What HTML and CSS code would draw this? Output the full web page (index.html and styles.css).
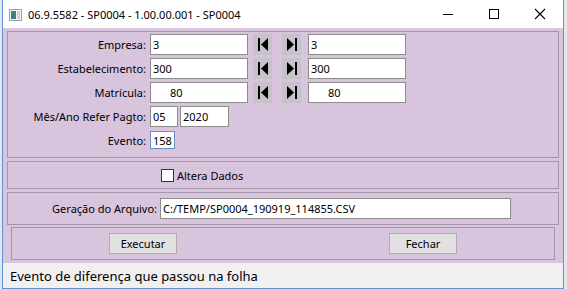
FILE: index.html
```html
<!DOCTYPE html>
<html lang="pt">

<head>
    <meta charset="UTF-8">
    <title>06.9.5582 - SP0004 - 1.00.00.001 - SP0004</title>
    <link rel="stylesheet" href="styles.css">
</head>

<body>
    <div class="window">
        <div class="titlebar">
            <svg class="app-icon" width="13" height="12" viewBox="0 0 13 12">
                <rect x="0.5" y="0.5" width="12" height="11" fill="#f4f6f6" stroke="#9aa4a8"/>
                <rect x="2" y="2" width="5" height="8" fill="#3f7f80"/>
                <rect x="8" y="2" width="3" height="8" fill="#c9d3d6"/>
            </svg>
            <span class="title">06.9.5582 - SP0004 - 1.00.00.001 - SP0004</span>
            <div class="controls">
                <svg class="ctl" width="46" height="28" viewBox="0 0 46 28">
                    <line x1="18" y1="14.5" x2="28" y2="14.5" stroke="#000" stroke-width="1"/>
                </svg>
                <svg class="ctl" width="46" height="28" viewBox="0 0 46 28">
                    <rect x="18.5" y="9.5" width="9" height="9" fill="none" stroke="#000" stroke-width="1"/>
                </svg>
                <svg class="ctl" width="46" height="28" viewBox="0 0 46 28">
                    <path d="M18 9 L28 19 M28 9 L18 19" stroke="#000" stroke-width="1.1"/>
                </svg>
            </div>
        </div>

        <div class="content">
            <div class="panel panel-fields">
                <div class="row">
                    <label class="lbl">Empresa:</label>
                    <input class="field f-wide" value="3">
                    <button class="nav nav-first"><svg width="12" height="13" viewBox="0 0 12 13"><rect x="1" y="0" width="2" height="13"/><path d="M11 0 L4 6.5 L11 13 Z"/></svg></button>
                    <button class="nav nav-last"><svg width="12" height="13" viewBox="0 0 12 13"><path d="M1 0 L8 6.5 L1 13 Z"/><rect x="9" y="0" width="2" height="13"/></svg></button>
                    <input class="field f-wide" value="3">
                </div>
                <div class="row">
                    <label class="lbl">Estabelecimento:</label>
                    <input class="field f-wide" value="300">
                    <button class="nav nav-first"><svg width="12" height="13" viewBox="0 0 12 13"><rect x="1" y="0" width="2" height="13"/><path d="M11 0 L4 6.5 L11 13 Z"/></svg></button>
                    <button class="nav nav-last"><svg width="12" height="13" viewBox="0 0 12 13"><path d="M1 0 L8 6.5 L1 13 Z"/><rect x="9" y="0" width="2" height="13"/></svg></button>
                    <input class="field f-wide" value="300">
                </div>
                <div class="row">
                    <label class="lbl">Matrícula:</label>
                    <input class="field f-wide num" value="80">
                    <button class="nav nav-first"><svg width="12" height="13" viewBox="0 0 12 13"><rect x="1" y="0" width="2" height="13"/><path d="M11 0 L4 6.5 L11 13 Z"/></svg></button>
                    <button class="nav nav-last"><svg width="12" height="13" viewBox="0 0 12 13"><path d="M1 0 L8 6.5 L1 13 Z"/><rect x="9" y="0" width="2" height="13"/></svg></button>
                    <input class="field f-wide num" value="80">
                </div>
                <div class="row">
                    <label class="lbl">Mês/Ano Refer Pagto:</label>
                    <input class="field f-month" value="05">
                    <input class="field f-year" value="2020">
                </div>
                <div class="row row-short">
                    <label class="lbl">Evento:</label>
                    <div class="field f-event">158<span class="caret"></span></div>
                </div>
            </div>

            <div class="panel panel-check">
                <span class="checkbox"></span>
                <span class="check-label">Altera Dados</span>
            </div>

            <div class="panel panel-file">
                <label class="lbl lbl-file">Geração do Arquivo:</label>
                <input class="field f-file" value="C:/TEMP/SP0004_190919_114855.CSV">
            </div>

            <div class="panel panel-buttons">
                <button class="btn btn-run">Executar</button>
                <button class="btn btn-close">Fechar</button>
            </div>

            <div class="statusbar">Evento de diferença que passou na folha</div>
        </div>
    </div>
</body>

</html>
```

FILE: styles.css
```css
body {
    margin: 0;
    background-color: #e4e7ec;
    font-family: 'Noto Sans', 'Liberation Sans', sans-serif;
    font-size: 11px;
    color: #000;
    overflow: hidden;
}

.window {
    margin-left: 2px;
    width: 560px;
    height: 288px;
    border-left: 1px solid #5d93d9;
    border-right: 1px solid #5d93d9;
    border-bottom: 1px solid #5d93d9;
    background-color: #d8c4dc;
    display: flex;
    flex-direction: column;
}

.titlebar {
    height: 28px;
    background-color: #fff;
    display: flex;
    align-items: center;
}

.app-icon {
    margin-left: 6px;
    margin-top: 1px;
}

.title {
    margin-left: 6px;
    font-size: 11px;
    color: #000;
}

.controls {
    margin-left: auto;
    display: flex;
}

.ctl {
    display: block;
}

.content {
    flex: 1;
    display: flex;
    flex-direction: column;
}

.panel {
    border: 1px solid #a396a6;
    margin-left: 4px;
    width: 550px;
    box-sizing: content-box;
}

.panel-fields {
    margin-top: 3px;
    height: 123px;
    padding-top: 2px;
    display: flex;
    flex-direction: column;
    gap: 3px;
}

.row {
    display: flex;
    align-items: center;
    height: 21px;
}

.row-short {
    height: 18px;
    margin-top: 1px;
}

.lbl {
    width: 138px;
    margin-right: 4px;
    text-align: right;
    white-space: nowrap;
}

.field {
    box-sizing: border-box;
    height: 21px;
    border: 1px solid #8c8c8c;
    background-color: #fff;
    font-family: inherit;
    font-size: 11px;
    padding: 0 2px;
    margin: 0;
    color: #000;
    outline: none;
}

.f-wide {
    width: 98px;
}

.num {
    padding-left: 19px;
}

.f-month {
    width: 28px;
}

.f-year {
    width: 49px;
    margin-left: 2px;
}

.f-event {
    width: 25px;
    height: 18px;
    border-color: #6b8ec4;
    display: flex;
    align-items: center;
    line-height: 1;
}

.caret {
    display: inline-block;
    width: 1px;
    height: 13px;
    background-color: #000;
    margin-left: 1px;
}

.nav {
    box-sizing: border-box;
    width: 19px;
    height: 21px;
    border: none;
    padding: 0;
    background-color: #c7c1c9;
    display: flex;
    align-items: center;
    justify-content: center;
    fill: #000;
}

.nav-first {
    margin-left: 5px;
}

.nav-last {
    margin-left: 10px;
    margin-right: 7px;
}

.panel-check {
    margin-top: 3px;
    height: 26px;
    display: flex;
    align-items: center;
    padding-left: 153px;
    width: 397px;
}

.checkbox {
    box-sizing: border-box;
    width: 13px;
    height: 13px;
    border: 1px solid #333;
    background-color: #fff;
    margin-top: 1px;
}

.check-label {
    margin-left: 3px;
}

.panel-file {
    margin-top: 3px;
    height: 31px;
    display: flex;
    align-items: center;
}

.lbl-file {
    width: 149px;
    margin-right: 3px;
}

.f-file {
    width: 351px;
}

.panel-buttons {
    margin-top: 2px;
    margin-left: 8px;
    width: 542px;
    height: 31px;
    display: flex;
    align-items: center;
}

.btn {
    box-sizing: border-box;
    height: 21px;
    width: 68px;
    border: 1px solid #adadad;
    background-color: #e1e1e1;
    font-family: inherit;
    font-size: 11px;
    color: #000;
    padding: 0;
}

.btn-run {
    margin-left: 97px;
}

.btn-close {
    margin-left: 212px;
}

.statusbar {
    margin-top: 3px;
    flex: 1;
    background-color: #f0f0f0;
    font-size: 13px;
    padding-left: 7px;
    display: flex;
    align-items: center;
}
```
